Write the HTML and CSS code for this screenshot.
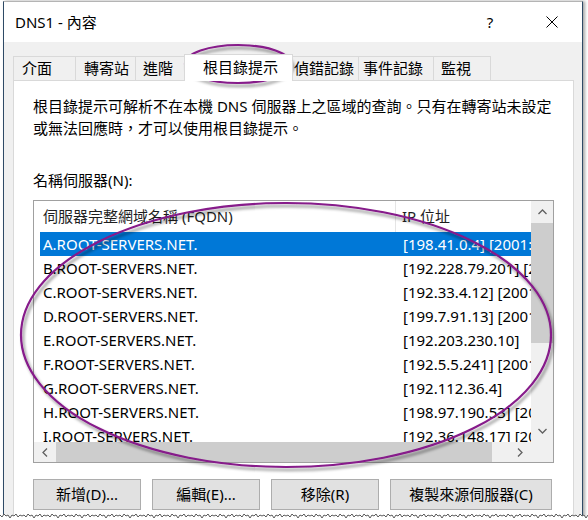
FILE: index.html
```html
<!DOCTYPE html>
<html lang="zh-Hant">
<head>
<meta charset="utf-8">
<title>DNS1 - 內容</title>
<link rel="stylesheet" href="styles.css">
</head>
<body>
<div class="window">
  <div class="titlebar">
    <span class="title">DNS1 - 內容</span>
    <span class="help">?</span>
    <svg class="close" width="12" height="12" viewBox="0 0 12 12"><path d="M0.5 0.5 L11.5 11.5 M11.5 0.5 L0.5 11.5" stroke="#000" stroke-width="1" fill="none"/></svg>
  </div>
  <div class="client">
    <div class="tabs">
      <div class="tab t1">介面</div>
      <div class="tab t2">轉寄站</div>
      <div class="tab t3">進階</div>
      <div class="tab t4 selected">根目錄提示</div>
      <div class="tab t5">偵錯記錄</div>
      <div class="tab t6">事件記錄</div>
      <div class="tab t7">監視</div>
    </div>
    <div class="panel">
      <p class="desc">根目錄提示可解析不在本機 DNS 伺服器上之區域的查詢。只有在轉寄站未設定<br>或無法回應時，才可以使用根目錄提示。</p>
      <div class="label">名稱伺服器(N):</div>
      <div class="listbox">
        <div class="view">
          <div class="hdr">
            <div class="hc1">伺服器完整網域名稱 (FQDN)</div>
            <div class="hc2">IP 位址</div>
          </div>
          <div class="row selected"><div class="rc1">A.ROOT-SERVERS.NET.</div><div class="rc2">[198.41.0.4] [2001:503:ba3e::2:30]</div></div>
          <div class="row"><div class="rc1">B.ROOT-SERVERS.NET.</div><div class="rc2">[192.228.79.201] [2001:500:84::b]</div></div>
          <div class="row"><div class="rc1">C.ROOT-SERVERS.NET.</div><div class="rc2">[192.33.4.12] [2001:500:2::c]</div></div>
          <div class="row"><div class="rc1">D.ROOT-SERVERS.NET.</div><div class="rc2">[199.7.91.13] [2001:500:2d::d]</div></div>
          <div class="row"><div class="rc1">E.ROOT-SERVERS.NET.</div><div class="rc2">[192.203.230.10]</div></div>
          <div class="row"><div class="rc1">F.ROOT-SERVERS.NET.</div><div class="rc2">[192.5.5.241] [2001:500:2f::f]</div></div>
          <div class="row"><div class="rc1">G.ROOT-SERVERS.NET.</div><div class="rc2">[192.112.36.4]</div></div>
          <div class="row"><div class="rc1">H.ROOT-SERVERS.NET.</div><div class="rc2">[198.97.190.53] [2001:500:1::53]</div></div>
          <div class="row"><div class="rc1">I.ROOT-SERVERS.NET.</div><div class="rc2">[192.36.148.17] [2001:7fe::53]</div></div>
        </div>
        <div class="vscroll">
          <div class="sbtn"><svg width="9" height="6" viewBox="0 0 9 6"><polyline points="0.5,5 4.5,1 8.5,5" fill="none" stroke="#606060" stroke-width="1.3"/></svg></div>
          <div class="vthumb"></div>
          <div class="track"></div>
          <div class="sbtn"><svg width="9" height="6" viewBox="0 0 9 6"><polyline points="0.5,1 4.5,5 8.5,1" fill="none" stroke="#606060" stroke-width="1.3"/></svg></div>
        </div>
        <div class="hscroll">
          <div class="sbtn h"><svg width="6" height="9" viewBox="0 0 6 9"><polyline points="5,0.5 1,4.5 5,8.5" fill="none" stroke="#606060" stroke-width="1.3"/></svg></div>
          <div class="hthumb"></div>
          <div class="track"></div>
          <div class="sbtn h"><svg width="6" height="9" viewBox="0 0 6 9"><polyline points="1,0.5 5,4.5 1,8.5" fill="none" stroke="#606060" stroke-width="1.3"/></svg></div>
        </div>
        <div class="corner"></div>
      </div>
      <div class="buttons">
        <div class="btn b1">新增(D)...</div>
        <div class="btn b2">編輯(E)...</div>
        <div class="btn b3">移除(R)</div>
        <div class="btn b4">複製來源伺服器(C)</div>
      </div>
    </div>
  </div>
</div>

<svg class="annot" width="588" height="520" viewBox="0 0 588 520">
  <defs>
    <filter id="sh" x="-10%" y="-10%" width="120%" height="130%">
      <feDropShadow dx="2" dy="3" stdDeviation="1.6" flood-color="#000" flood-opacity="0.45"/>
    </filter>
  </defs>
  <g filter="url(#sh)" fill="none" stroke="#861a8a" stroke-width="2.2">
    <ellipse cx="238" cy="64" rx="53" ry="19"/>
    <ellipse cx="286" cy="335" rx="265" ry="132"/>
  </g>
</svg>

<svg class="torn" width="588" height="9" viewBox="0 0 588 9">
  <defs>
    <pattern id="zz" width="24" height="9" patternUnits="userSpaceOnUse">
      <path d="M0 4 L2 6 L4 3 L6 5 L8 4 L10 7 L12 4 L14 5 L16 3 L18 6 L20 4 L22 5 L24 4 L24 9 L0 9 Z" fill="#fff"/>
      <polyline points="0,4 2,6 4,3 6,5 8,4 10,7 12,4 14,5 16,3 18,6 20,4 22,5 24,4" fill="none" stroke="#5a5a5a" stroke-width="1"/>
    </pattern>
  </defs>
  <rect x="0" y="0" width="588" height="9" fill="url(#zz)"/>
</svg>
</body>
</html>
```

FILE: styles.css
```css
* {
  box-sizing: border-box;
}

html,
body {
  margin: 0;
  padding: 0;
}

body {
  position: relative;
  width: 588px;
  height: 520px;
  overflow: hidden;
  background: #fff;
  font-family: "Noto Sans", "Noto Sans CJK TC", sans-serif;
  font-size: 15px;
  color: #000;
}

.window {
  margin: 1px 0 0 3px;
  width: 580px;
  height: 519px;
  border: 1px solid #2e4a66;
  border-top-color: #b4b4b4;
  border-bottom: none;
  background: #f0f0f0;
  box-shadow: 2px 0 3px rgba(0, 0, 0, 0.35);
  display: flex;
  flex-direction: column;
  overflow: hidden;
}

.titlebar {
  flex: none;
  height: 40px;
  background: #fff;
  display: flex;
  align-items: center;
  padding: 0 24px 0 11px;
}

.title {
  flex: 1;
  line-height: 20px;
}

.help {
  width: 20px;
  text-align: center;
  line-height: 20px;
}

.close {
  margin-left: 46px;
  display: block;
}

.client {
  flex: 1;
  display: flex;
  flex-direction: column;
  padding: 12px 8px 0 9px;
}

.tabs {
  flex: none;
  height: 26px;
  display: flex;
  align-items: flex-end;
}

.tab {
  height: 24px;
  line-height: 23px;
  border: 1px solid #d9d9d9;
  border-bottom: none;
  background: #f0f0f0;
  margin-right: -1px;
  white-space: nowrap;
}

.tab.selected {
  position: relative;
  z-index: 2;
  height: 27px;
  line-height: 25px;
  margin: 0 -2px -1px -2px;
  background: #fff;
}

.t1 { width: 63px; padding-left: 8px; }
.t2 { width: 61px; padding-left: 8px; }
.t3 { width: 52px; padding-left: 7px; }
.t4 { width: 109px; padding-left: 18px; }
.t5 { width: 68px; padding-left: 2px; }
.t6 { width: 76px; padding-left: 4px; }
.t7 { width: 58px; padding-left: 7px; }

.panel {
  flex: 1;
  background: #fff;
  border: 1px solid #d9d9d9;
  border-bottom: none;
  padding: 14px 19px 0 19px;
}

.desc {
  margin: 0;
  line-height: 22px;
  white-space: nowrap;
}

.label {
  margin-top: 30px;
  line-height: 22px;
}

.listbox {
  margin-top: 9px;
  width: 521px;
  height: 263px;
  border: 1px solid #a0a0a0;
  display: grid;
  grid-template-columns: 497px 22px;
  grid-template-rows: 241px 20px;
  background: #fff;
}

.view {
  overflow: hidden;
  white-space: nowrap;
}

.hdr {
  height: 31px;
  display: flex;
  line-height: 30px;
  color: #1e1e1e;
}

.hc1 {
  flex: none;
  width: 362px;
  padding-left: 9px;
  border-right: 1px solid #e5e5e5;
}

.hc2 {
  flex: none;
  padding-left: 6px;
}

.row {
  display: flex;
  height: 24px;
  line-height: 24px;
  margin-left: 6px;
}

.row.selected {
  background: #0078d7;
  color: #fff;
}

.rc1 {
  flex: none;
  width: 363px;
  padding-left: 3px;
}

.rc2 {
  flex: none;
}

.vscroll {
  display: flex;
  flex-direction: column;
  background: #f0f0f0;
}

.sbtn {
  flex: none;
  height: 22px;
  display: flex;
  align-items: center;
  justify-content: center;
}

.sbtn.h {
  width: 22px;
  height: 20px;
}

.sbtn svg {
  display: block;
}

.vthumb {
  flex: none;
  height: 120px;
  background: #cdcdcd;
}

.track {
  flex: 1;
}

.hscroll {
  display: flex;
  background: #f0f0f0;
}

.hthumb {
  flex: none;
  width: 436px;
  background: #cdcdcd;
}

.corner {
  background: #f0f0f0;
}

.buttons {
  margin-top: 16px;
  display: flex;
  gap: 11px;
}

.btn {
  flex: none;
  height: 31px;
  line-height: 29px;
  text-align: center;
  background: #e1e1e1;
  border: 1px solid #adadad;
}

.b1,
.b2,
.b3 {
  width: 108px;
}

.b4 {
  width: 162px;
}

.annot {
  position: absolute;
  left: 0;
  top: 0;
  pointer-events: none;
}

.torn {
  position: absolute;
  left: 0;
  top: 511px;
}
```
